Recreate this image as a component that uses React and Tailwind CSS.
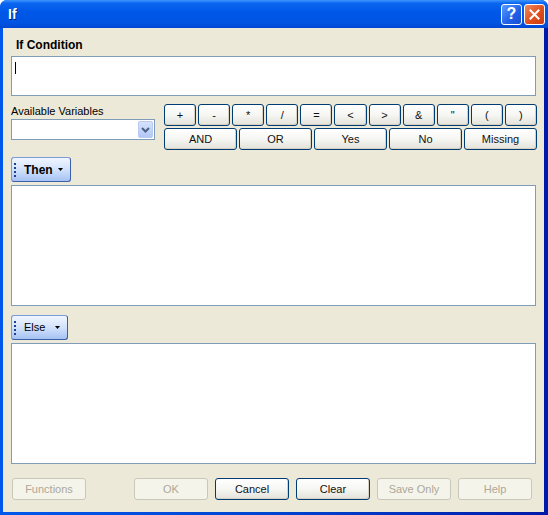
const font = { fontFamily: '"Liberation Sans", Arial, sans-serif' }

function XpButton({ children, disabled, className = '' }) {
  return (
    <button
      type="button"
      disabled={disabled}
      style={font}
      className={
        'flex h-[22px] items-center justify-center rounded-[3px] border text-[11px] font-normal leading-none ' +
        (disabled
          ? 'border-[#C9C7BA] bg-[#F5F4EA] text-[#ACA899] '
          : 'border-[#003C74] bg-gradient-to-b from-[#FFFFFF] via-[#F6F6F3] to-[#E3E2DA] text-[#111] shadow-[inset_-1px_-1px_0_#D6D0C5] ') +
        className
      }
    >
      {children}
    </button>
  )
}

function OpButton({ children }) {
  return (
    <button
      type="button"
      style={font}
      className="flex h-[22px] items-center justify-center rounded-[3px] border border-[#003C74] bg-gradient-to-b from-[#FFFFFF] via-[#F6F6F3] to-[#E3E2DA] text-[11px] font-normal leading-none text-[#111] shadow-[inset_-1px_-1px_0_#D6D0C5]"
    >
      {children}
    </button>
  )
}

function ToolButton({ label, bold, width }) {
  return (
    <div
      className={
        'flex h-[25px] items-center rounded-[3px] border border-[#7A9AD8] border-b-[#3D5FA8] border-r-[#3D5FA8] bg-gradient-to-b from-[#F1F6FF] via-[#D2E2FC] to-[#A6C2F3] ' +
        width
      }
    >
      <div className="ml-[2px] flex flex-col gap-[2px]">
        <span className="h-[2px] w-[2px] bg-[#1F3F8F]" />
        <span className="h-[2px] w-[2px] bg-[#1F3F8F]" />
        <span className="h-[2px] w-[2px] bg-[#1F3F8F]" />
        <span className="h-[2px] w-[2px] bg-[#1F3F8F]" />
      </div>
      <span className={'ml-[8px] text-black ' + (bold ? 'text-[12px] font-bold' : 'text-[11px] font-normal')}>{label}</span>
      <svg className="ml-auto mr-[6px]" width="6" height="4" viewBox="0 0 6 4">
        <path d="M0 0h5L2.5 3z" fill="#000" />
      </svg>
    </div>
  )
}

export default function App() {
  const ops = ['+', '-', '*', '/', '=', '<', '>', '&', '"', '(', ')']
  const words = ['AND', 'OR', 'Yes', 'No', 'Missing']

  return (
    <div className="h-[515px] w-[548px] overflow-hidden bg-white" style={font}>
      <div className="flex h-full flex-col rounded-t-[7px] bg-gradient-to-r from-[#0057EC] via-[#0044D0] to-[#0019A8]">
        {/* title bar */}
        <div className="flex h-[28px] items-center rounded-t-[7px] bg-[linear-gradient(to_bottom,#3D95FF_0%,#0A66F0_12%,#0058E8_40%,#0054E2_80%,#0048D2_100%)] pl-[8px] pr-[3px]">
          <span className="text-[14px] font-bold text-white [text-shadow:1px_1px_0_#0A1F6E]">If</span>
          <div className="ml-auto flex gap-[2px]">
            <div className="flex h-[21px] w-[21px] items-center justify-center rounded-[3px] border border-white bg-[linear-gradient(135deg,#5A9BFF,#1F5FE6_60%,#1A4FD0)] text-[16px] font-bold leading-none text-white">
              ?
            </div>
            <div className="flex h-[21px] w-[21px] items-center justify-center rounded-[3px] border border-white bg-[linear-gradient(135deg,#F08A60,#E0501E_55%,#C83C10)]">
              <svg width="11" height="11" viewBox="0 0 11 11">
                <path d="M1.5 1.5l8 8M9.5 1.5l-8 8" stroke="#fff" strokeWidth="2" strokeLinecap="square" />
              </svg>
            </div>
          </div>
        </div>

        {/* body */}
        <div className="mb-[3px] ml-[3px] mr-[4px] flex flex-1 flex-col bg-[#ECE9D8] px-[8px] pt-[9px]">
          <div className="ml-[5px] h-[16px] text-[12px] font-bold leading-[16px] text-black">If Condition</div>
          <div className="mt-[3px] h-[40px] border border-[#7F9DB9] bg-white pl-[3px] pt-[5px]">
            <div className="h-[12px] w-[1px] bg-black" />
          </div>

          <div className="flex h-[54px]">
            <div className="flex w-[144px] flex-col pt-[7px]">
              <div className="h-[16px] text-[11px] leading-[16px] text-black">Available Variables</div>
              <div className="flex h-[21px] items-center border border-[#7F9DB9] bg-white pr-[1px]">
                <div className="ml-auto flex h-[17px] w-[15px] items-center justify-center rounded-[2px] border border-[#B9CBF3] bg-gradient-to-b from-[#D6E3FD] to-[#B2C7F6]">
                  <svg width="9" height="6" viewBox="0 0 9 6">
                    <path d="M1 1l3.5 3.5L8 1" stroke="#4D6185" strokeWidth="2" fill="none" />
                  </svg>
                </div>
              </div>
            </div>
            <div className="-mr-[2px] ml-[9px] mt-[8px] flex w-[373px] flex-col gap-[2px]">
              <div className="grid grid-cols-11 gap-[2px]">
                {ops.map((o) => (
                  <OpButton key={o}>{o}</OpButton>
                ))}
              </div>
              <div className="grid grid-cols-5 gap-[2px]">
                {words.map((w) => (
                  <OpButton key={w}>{w}</OpButton>
                ))}
              </div>
            </div>
          </div>

          <div className="mt-[7px]">
            <ToolButton label="Then" bold width="w-[60px]" />
          </div>
          <div className="mt-[3px] h-[121px] border border-[#7F9DB9] bg-white" />

          <div className="mt-[9px]">
            <ToolButton label="Else" width="w-[57px]" />
          </div>
          <div className="mt-[3px] h-[121px] border border-[#7F9DB9] bg-white" />

          <div className="mt-[14px] flex">
            <XpButton disabled className="ml-[1px] w-[74px]">Functions</XpButton>
            <div className="ml-auto mr-[4px] flex gap-[7px]">
              <XpButton disabled className="w-[74px]">OK</XpButton>
              <XpButton className="w-[74px]">Cancel</XpButton>
              <XpButton className="w-[74px]">Clear</XpButton>
              <XpButton disabled className="w-[74px]">Save Only</XpButton>
              <XpButton disabled className="w-[74px]">Help</XpButton>
            </div>
          </div>
        </div>
      </div>
    </div>
  )
}
